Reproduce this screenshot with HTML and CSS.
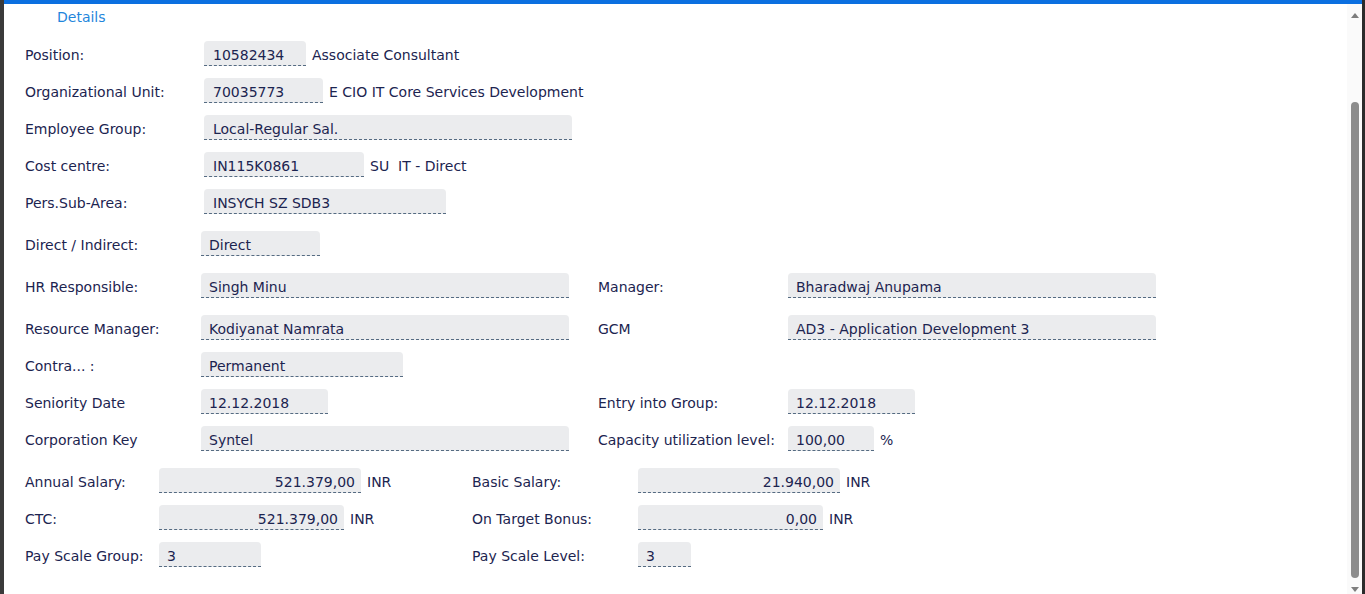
FILE: index.html
```html
<!DOCTYPE html>
<html>
<head>
<meta charset="utf-8">
<link rel="stylesheet" href="styles.css">
</head>
<body>
<div class="frame">
  <div class="topbar"></div>
  <div class="body">
    <main class="content">
      <div class="tab">Details</div>

      <section class="sec sec1">
        <div class="row"><span class="lbl">Position:</span><span class="fld w102">10582434</span><span class="txt">Associate Consultant</span></div>
        <div class="row"><span class="lbl">Organizational Unit:</span><span class="fld w119">70035773</span><span class="txt">E CIO IT Core Services Development</span></div>
        <div class="row"><span class="lbl">Employee Group:</span><span class="fld w368">Local-Regular Sal.</span></div>
        <div class="row"><span class="lbl">Cost centre:</span><span class="fld w160">IN115K0861</span><span class="txt">SU&nbsp; IT - Direct</span></div>
        <div class="row"><span class="lbl">Pers.Sub-Area:</span><span class="fld w242">INSYCH SZ SDB3</span></div>
      </section>

      <section class="sec sec2">
        <span class="lbl">Direct / Indirect:</span><span class="cell"><span class="fld w119">Direct</span></span><span></span><span></span>
        <span class="lbl">HR Responsible:</span><span class="cell"><span class="fld w368">Singh Minu</span></span><span class="lbl">Manager:</span><span class="cell"><span class="fld w368">Bharadwaj Anupama</span></span>
        <span class="lbl">Resource Manager:</span><span class="cell"><span class="fld w368">Kodiyanat Namrata</span></span><span class="lbl">GCM</span><span class="cell"><span class="fld w368">AD3 - Application Development 3</span></span>
        <span class="lbl tight">Contra... :</span><span class="cell tight"><span class="fld w202">Permanent</span></span><span class="tight"></span><span class="tight"></span>
        <span class="lbl tight">Seniority Date</span><span class="cell tight"><span class="fld w127">12.12.2018</span></span><span class="lbl tight">Entry into Group:</span><span class="cell tight"><span class="fld w127">12.12.2018</span></span>
        <span class="lbl tight">Corporation Key</span><span class="cell tight"><span class="fld w368">Syntel</span></span><span class="lbl tight">Capacity utilization level:</span><span class="cell tight"><span class="fld w86">100,00</span><span class="txt">%</span></span>
      </section>

      <section class="sec sec3">
        <span class="lbl">Annual Salary:</span><span class="cell"><span class="fld w202 num">521.379,00</span><span class="txt">INR</span></span><span class="lbl">Basic Salary:</span><span class="cell"><span class="fld w202 num">21.940,00</span><span class="txt">INR</span></span>
        <span class="lbl">CTC:</span><span class="cell"><span class="fld w185 num">521.379,00</span><span class="txt">INR</span></span><span class="lbl">On Target Bonus:</span><span class="cell"><span class="fld w185 num">0,00</span><span class="txt">INR</span></span>
        <span class="lbl">Pay Scale Group:</span><span class="cell"><span class="fld w102">3</span></span><span class="lbl">Pay Scale Level:</span><span class="cell"><span class="fld w53">3</span></span>
      </section>
    </main>
    <div class="scroll">
      <div class="arrow up"></div>
      <div class="track"><div class="thumb"></div></div>
      <div class="arrow down"></div>
    </div>
  </div>
</div>
</body>
</html>
```

FILE: styles.css
```css
* { box-sizing: border-box; }
html, body { margin: 0; padding: 0; }
body {
  width: 1365px;
  height: 594px;
  overflow: hidden;
  background: #ffffff;
  font-family: "DejaVu Sans", Verdana, sans-serif;
  font-size: 14px;
  color: #1c2450;
}
.frame {
  height: 594px;
  border-left: 4px solid #3a3a3a;
  border-right: 3px solid #2b2b2b;
  display: flex;
  flex-direction: column;
}
.topbar {
  height: 4px;
  background: #0b6fe0;
  flex: none;
}
.body {
  flex: 1;
  display: flex;
  min-height: 0;
}
.content {
  flex: 1;
  padding-left: 21px;
}
.tab {
  color: #1f86dc;
  margin-left: 32px;
  height: 28px;
  line-height: 27px;
}
.sec1 {
  display: flex;
  flex-direction: column;
  gap: 12px;
  margin-top: 9px;
}
.row {
  display: flex;
  align-items: center;
  height: 25px;
}
.sec1 .lbl { width: 179px; }
.lbl {
  display: flex;
  align-items: center;
  height: 25px;
  padding-top: 3px;
  white-space: nowrap;
}
.fld {
  display: inline-flex;
  align-items: center;
  height: 25px;
  padding: 3px 8px 0 9px;
  background: #ebecee;
  border-radius: 4px 4px 0 0;
  border-bottom: 1px dashed #556b82;
  white-space: nowrap;
  flex: none;
}
.sec2 .fld { padding-left: 8px; }
.sec3 .fld { padding-left: 8px; }
.fld.num { justify-content: flex-end; padding-right: 6px; }
.txt {
  margin-left: 6px;
  padding-top: 3px;
  white-space: nowrap;
}
.cell {
  display: flex;
  align-items: center;
  height: 25px;
}
.sec2 {
  display: grid;
  grid-template-columns: 176px 397px 190px 1fr;
  row-gap: 17px;
  margin-top: 17px;
}
.sec2 .tight { margin-top: -5px; }
.sec3 {
  display: grid;
  grid-template-columns: 134px 313px 166px 1fr;
  row-gap: 12px;
  margin-top: 17px;
}
.w53 { width: 53px; }
.w86 { width: 86px; }
.w102 { width: 102px; }
.w119 { width: 119px; }
.w127 { width: 127px; }
.w160 { width: 160px; }
.w185 { width: 185px; }
.w202 { width: 202px; }
.w242 { width: 242px; }
.w368 { width: 368px; }

.scroll {
  width: 15px;
  flex: none;
  background: #fafafa;
  display: flex;
  flex-direction: column;
  align-items: center;
}
.arrow {
  width: 0; height: 0;
  border-left: 4px solid transparent;
  border-right: 4px solid transparent;
  flex: none;
}
.arrow.up { border-bottom: 5px solid #7d7d7d; margin-top: 9px; }
.arrow.down { border-top: 5px solid #7d7d7d; margin-bottom: 2px; }
.track {
  flex: 1;
  width: 100%;
  display: flex;
  justify-content: center;
  padding-top: 84px;
  padding-bottom: 9px;
}
.thumb {
  width: 8px;
  height: 100%;
  background: #8c8c8c;
  border-radius: 4px;
}
```
